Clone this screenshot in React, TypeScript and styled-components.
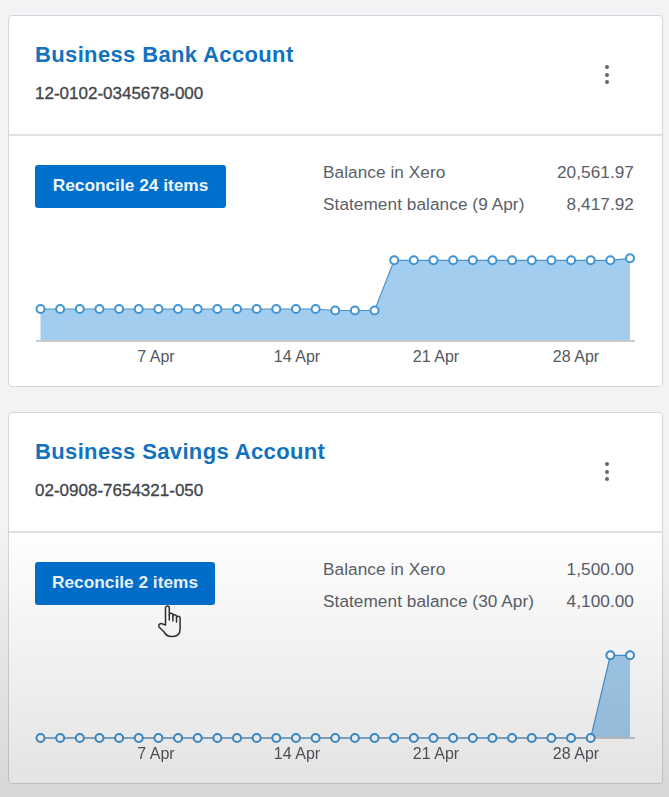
import React from "react";
import styled, { createGlobalStyle } from "styled-components";

const Global = createGlobalStyle`
  html, body { margin: 0; padding: 0; background: #f2f3f5; }
  body { font-family: "Liberation Sans", Arial, sans-serif; }
`;

const Page = styled.div`
  position: relative;
  width: 669px;
  height: 797px;
  box-sizing: border-box;
  padding: 15px 6px 0 8px;
  background: #f2f3f5;
  overflow: hidden;
  display: flex;
  flex-direction: column;
  gap: 25px;
`;

const Soft = styled.div`
  display: flex;
  flex-direction: column;
  gap: 25px;
  filter: blur(0.4px);
`;

const Shade = styled.div`
  position: absolute;
  left: 0;
  right: 0;
  bottom: 0;
  height: 272px;
  pointer-events: none;
  background: linear-gradient(to bottom, rgba(0, 0, 0, 0), rgba(0, 0, 0, 0.115));
`;

const Card = styled.section`
  box-sizing: border-box;
  width: 655px;
  height: 372px;
  background: #fff;
  border: 1px solid #d3d5d8;
  border-radius: 4px;
  display: flex;
  flex-direction: column;
`;

const Header = styled.header`
  box-sizing: border-box;
  height: 120px;
  flex: none;
  border-bottom: 2px solid #dfe1e3;
  padding: 25px 26px 0 26px;
  display: flex;
  justify-content: space-between;
  align-items: flex-start;
`;

const Title = styled.h2`
  margin: 0;
  font-size: 22px;
  line-height: 28px;
  font-weight: 700;
  color: #1272bd;
  letter-spacing: 0.36px;
`;

const Number = styled.div`
  margin-top: 14px;
  font-size: 17px;
  line-height: 22px;
  font-weight: 400;
  color: #3f444a;
  -webkit-text-stroke: 0.3px #3f444a;
`;

const Kebab = styled.div`
  display: flex;
  flex-direction: column;
  gap: 3.5px;
  margin: 24px 27px 0 0;
`;

const Dot = styled.span`
  width: 4px;
  height: 4px;
  border-radius: 50%;
  background: #63676c;
`;

const Body = styled.div`
  box-sizing: border-box;
  flex: 1;
  min-height: 0;
  display: flex;
  flex-direction: column;
`;

const Summary = styled.div`
  box-sizing: border-box;
  height: 104px;
  flex: none;
  padding: 29px 28px 0 26px;
  display: flex;
  justify-content: space-between;
  align-items: flex-start;
`;

const ButtonWrap = styled.div`
  position: relative;
`;

const Reconcile = styled.button`
  box-sizing: border-box;
  height: 43px;
  width: ${(p: { $w: number }) => p.$w}px;
  border: 0;
  border-radius: 3px;
  background: #0070cd;
  color: #eef6fc;
  font-family: inherit;
  font-size: 17.3px;
  font-weight: 700;
  padding: 0 0 2px;
  text-align: center;
  white-space: nowrap;
`;

const Cursor = styled.svg`
  position: absolute;
  left: 122px;
  top: 42px;
`;

const Stats = styled.div`
  width: 311px;
  margin-top: -4px;
  display: flex;
  flex-direction: column;
  gap: 10px;
`;

const Row = styled.div`
  display: flex;
  justify-content: space-between;
  font-size: 17.2px;
  line-height: 22px;
  letter-spacing: 0.07px;
  color: #5a6068;
`;

const Chart = styled.svg`
  display: block;
  flex: none;
`;

const AxisLabel = styled.text`
  font-family: "Liberation Sans", Arial, sans-serif;
  font-size: 16px;
  fill: #54585e;
  text-anchor: middle;
`;

const X0 = 31.5;
const STEP = 19.65;
const BASE = 101;
const TICKS: [string, number][] = [
  ["7 Apr", 147],
  ["14 Apr", 288],
  ["21 Apr", 427],
  ["28 Apr", 567],
];

function Spark({ values }: { values: number[] }) {
  const pts = values.map((v, i) => [X0 + i * STEP, v] as const);
  const line = pts.map(([x, y]) => `${x},${y}`).join(" ");
  const first = pts.findIndex(([, y]) => y < BASE);
  const start = first > 0 ? first - 1 : 0;
  const area = pts.slice(start);
  const poly = `${area[0][0]},${BASE} ${area.map(([x, y]) => `${x},${y}`).join(" ")} ${area[area.length - 1][0]},${BASE}`;
  return (
    <Chart width={653} height={146} viewBox="0 0 653 146">
      <polygon points={poly} fill="#a3cdee" />
      <line x1={27} x2={626} y1={BASE} y2={BASE} stroke="#c6c9cd" strokeWidth={2} />
      <polyline points={line} fill="none" stroke="#4c93cb" strokeWidth={1.2} />
      {pts.map(([x, y], i) => (
        <circle key={i} cx={x} cy={y} r={4} fill="#fff" stroke="#3f94d4" strokeWidth={2} />
      ))}
      {TICKS.map(([t, x]) => (
        <AxisLabel key={t} x={x} y={122}>
          {t}
        </AxisLabel>
      ))}
    </Chart>
  );
}

const first = Array.from({ length: 31 }, (_, i) =>
  i < 15 ? 69 : i < 18 ? 70.5 : i < 30 ? 20.3 : 18.3
);
const second = Array.from({ length: 31 }, (_, i) => (i < 29 ? BASE : 18.3));

function HandCursor() {
  return (
    <Cursor width={26} height={34} viewBox="0 0 26 34" fill="#fff" stroke="#2e3134" strokeWidth={1.5} strokeLinejoin="round" strokeLinecap="round">
      <path d="M8.5 21 V4 a1.9 1.9 0 0 1 3.8 0 V11 a1.8 1.8 0 0 1 3.6 0 V12.5 a1.8 1.8 0 0 1 3.6 0 V14 a1.8 1.8 0 0 1 3.6 0 V25 c0 5 -3 7.5 -7.5 7.5 h-1.5 c-4 0 -5.5 -2 -7 -4.5 L2 23 c-1.2 -2.2 1.5 -4.5 3.5 -3 z" />
      <path d="M12.3 11 V16 M15.9 12.5 V17 M19.5 14 V18" fill="none" />
    </Cursor>
  );
}

interface AccountProps {
  name: string;
  number: string;
  action: string;
  actionWidth: number;
  xero: string;
  statementLabel: string;
  statement: string;
  values: number[];
  cursor?: boolean;
}

function Account(p: AccountProps) {
  return (
    <Card>
      <Header>
        <div>
          <Title>{p.name}</Title>
          <Number>{p.number}</Number>
        </div>
        <Kebab>
          <Dot />
          <Dot />
          <Dot />
        </Kebab>
      </Header>
      <Body>
        <Summary>
          <ButtonWrap>
            <Reconcile $w={p.actionWidth}>{p.action}</Reconcile>
            {p.cursor && <HandCursor />}
          </ButtonWrap>
          <Stats>
            <Row>
              <span>Balance in Xero</span>
              <span>{p.xero}</span>
            </Row>
            <Row>
              <span>{p.statementLabel}</span>
              <span>{p.statement}</span>
            </Row>
          </Stats>
        </Summary>
        <Spark values={p.values} />
      </Body>
    </Card>
  );
}

export default function App() {
  return (
    <Page>
      <Global />
      <Soft>
        <Account
          name="Business Bank Account"
          number="12-0102-0345678-000"
          action="Reconcile 24 items"
          actionWidth={191}
          xero="20,561.97"
          statementLabel="Statement balance (9 Apr)"
          statement="8,417.92"
          values={first}
        />
        <Account
          name="Business Savings Account"
          number="02-0908-7654321-050"
          action="Reconcile 2 items"
          actionWidth={180}
          xero="1,500.00"
          statementLabel="Statement balance (30 Apr)"
          statement="4,100.00"
          values={second}
          cursor
        />
      </Soft>
      <Shade />
    </Page>
  );
}
